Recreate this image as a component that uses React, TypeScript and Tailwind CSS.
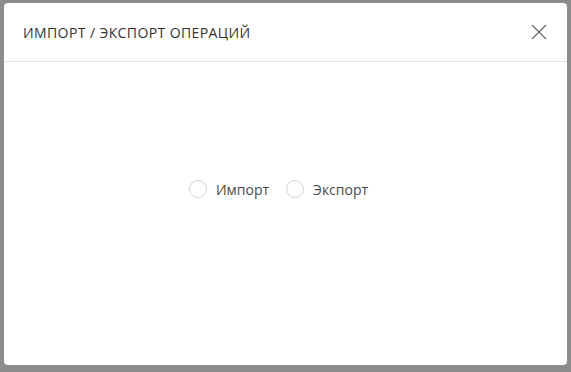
import React, { useState } from "react";

export default function App() {
  const [mode, setMode] = useState<"import" | "export" | null>(null);

  const options = [
    { id: "import" as const, label: "Импорт" },
    { id: "export" as const, label: "Экспорт" },
  ];

  return (
    <div
      className="w-[571px] h-[372px] bg-[#8c8c8c] pt-[3px] pl-[4px]"
      style={{ fontFamily: '"Open Sans", "Noto Sans", sans-serif' }}
    >
      <div className="w-[563px] h-[362px] bg-white rounded-[4px] flex flex-col overflow-hidden">
        {/* Header */}
        <div className="h-[59px] flex items-center justify-between pl-[19px] pr-[20px] border-b border-[#e2e2e2] shrink-0">
          <h2 className="text-[14px] text-[#333333] uppercase tracking-[0.4px] leading-none pt-[1px]">
            Импорт / Экспорт операций
          </h2>
          <button className="w-[16px] h-[16px] flex items-center justify-center text-[#666666]">
            <svg width="16" height="16" viewBox="0 0 16 16" fill="none">
              <path d="M1 1 L15 15 M15 1 L1 15" stroke="currentColor" strokeWidth="1.2" />
            </svg>
          </button>
        </div>

        {/* Body */}
        <div className="flex-1 flex justify-center pt-[116px] pr-[14px]">
          <div className="flex items-center gap-[17px] h-[22px]">
            {options.map((o) => (
              <label key={o.id} className="flex items-center gap-[9px] cursor-pointer">
                <span
                  onClick={() => setMode(o.id)}
                  className="w-[18px] h-[18px] rounded-full border border-[#d4d4d4] bg-white flex items-center justify-center"
                >
                  {mode === o.id && <span className="w-[8px] h-[8px] rounded-full bg-[#3b82f6]" />}
                </span>
                <span className="text-[14px] text-[#4a4a4a]">{o.label}</span>
              </label>
            ))}
          </div>
        </div>
      </div>
    </div>
  );
}
